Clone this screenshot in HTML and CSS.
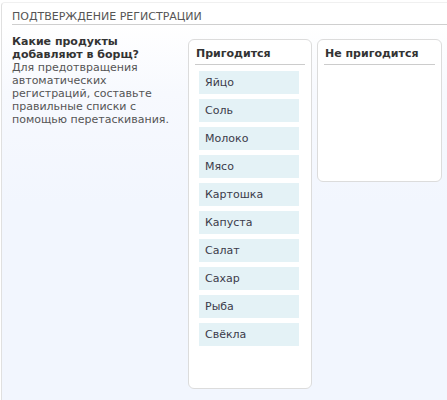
FILE: index.html
```html
<!DOCTYPE html>
<html lang="ru">
<head>
<meta charset="utf-8">
<title>Подтверждение регистрации</title>
<link rel="stylesheet" href="styles.css">
</head>
<body>
<div class="frame">
  <div class="title">Подтверждение регистрации</div>
  <div class="content">
    <div class="intro">
      <div class="question">Какие продукты добавляют в борщ?</div>
      <div class="hint">Для предотвращения автоматических регистраций, составьте правильные списки с помощью перетаскивания.</div>
    </div>
    <div class="column column-yes">
      <div class="column-head">Пригодится</div>
      <ul class="items">
        <li class="item">Яйцо</li>
        <li class="item">Соль</li>
        <li class="item">Молоко</li>
        <li class="item">Мясо</li>
        <li class="item">Картошка</li>
        <li class="item">Капуста</li>
        <li class="item">Салат</li>
        <li class="item">Сахар</li>
        <li class="item">Рыба</li>
        <li class="item">Свёкла</li>
      </ul>
    </div>
    <div class="column column-no">
      <div class="column-head">Не пригодится</div>
      <ul class="items"></ul>
    </div>
  </div>
</div>
</body>
</html>
```
FILE: styles.css
```css
html, body {
  margin: 0;
  padding: 0;
  background: #fff;
}
body {
  font-family: "DejaVu Sans", Verdana, sans-serif;
  font-size: 11px;
  line-height: 13px;
  color: #333;
}
.frame {
  margin: 2px 0 0 1px;
  height: 398px;
  box-sizing: border-box;
  border-left: 1px solid #e0e0e0;
  border-top: 1px solid #f0f0f0;
  border-top-left-radius: 4px;
  background: linear-gradient(to bottom, #ffffff 0px, #ffffff 22px, #f7f9fe 90px, #f2f6fe 200px, #f2f6fe 100%);
}
.title {
  margin-left: 10px;
  padding: 7px 0 1px;
  color: #555;
  text-transform: uppercase;
  border-bottom: 1px solid #cfcfcf;
}
.content {
  display: flex;
  align-items: flex-start;
  padding: 14px 0 0 10px;
}
.intro {
  width: 176px;
  flex: none;
  color: #555;
  margin-top: -4px;
}
.question {
  font-weight: bold;
  color: #333;
  width: 140px;
}
.hint {
  width: 170px;
}
.column {
  flex: none;
  box-sizing: border-box;
  width: 124px;
  background: #fff;
  border: 1px solid #dcdcdc;
  border-radius: 6px;
}
.column-yes {
  height: 350px;
}
.column-no {
  width: 125px;
  height: 143px;
  margin-left: 5px;
}
.column-head {
  margin: 0 6px;
  padding: 7px 1px 4px;
  font-weight: bold;
  color: #333;
  border-bottom: 1px solid #cccccc;
}
.items {
  list-style: none;
  margin: 0;
  padding: 6px 0 0 10px;
}
.item {
  width: 100px;
  height: 23px;
  line-height: 23px;
  box-sizing: border-box;
  padding-left: 6px;
  margin-bottom: 5px;
  background: #e4f2f6;
  color: #3b3b4a;
}
```
